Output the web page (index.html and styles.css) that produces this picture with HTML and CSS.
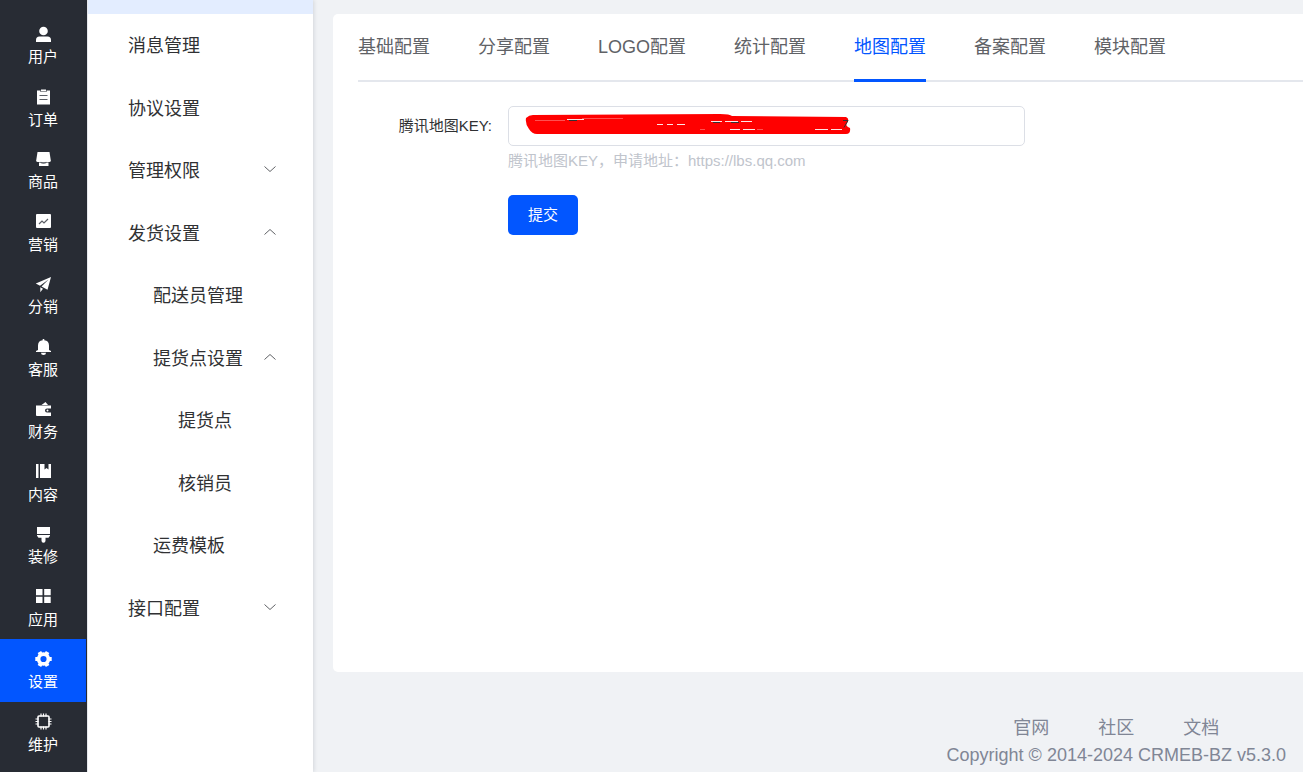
FILE: index.html
```
<!DOCTYPE html>
<html lang="zh-CN">
  <head>
    <meta charset="UTF-8" />
    <meta name="viewport" content="width=device-width, initial-scale=1.0" />
    <title>地图配置</title>
    <link rel="stylesheet" href="styles.css">
  </head>
  <body>
    <div class="layout">
      <nav class="rail" aria-label="主菜单">
        <a class="rail-item" href="#">
          <svg class="rail-icon" viewBox="0 0 16 16"><circle cx="8.5" cy="5" r="4.3"/><path d="M1 16v-2a3.500 3.500 0 0 1 3.500-3.500h8a3.500 3.500 0 0 1 3.500 3.500v2z"/></svg>
          <span>用户</span>
        </a>
        <a class="rail-item" href="#">
          <svg class="rail-icon" viewBox="0 0 16 16"><path d="M2 1.500h3.500v1.500h6v-1.500h3.500v14h-13z"/><path d="M6 .5h5v2h-5z"/><path class="cut" d="M4.500 6.500h8M4.500 10.500h8"/></svg>
          <span>订单</span>
        </a>
        <a class="rail-item" href="#">
          <svg class="rail-icon" viewBox="0 0 16 16"><path d="M2.500 1h12l1.300 8.500a1.500 1.500 0 0 1-1.500 1.500h-11.600a1.500 1.500 0 0 1-1.500-1.500z"/><path d="M4 11.500h9.500v3.500h-9.500z"/><path class="cut" d="M5.500 11.200q3 1.800 6 0"/></svg>
          <span>商品</span>
        </a>
        <a class="rail-item" href="#">
          <svg class="rail-icon" viewBox="0 0 16 16"><rect x="1" width="15" height="14" rx="1"/><path class="cut" d="M4 10l3-3 2 2 4-4"/></svg>
          <span>营销</span>
        </a>
        <a class="rail-item" href="#">
          <svg class="rail-icon" viewBox="0 0 16 16"><path d="M16 1L.8 7.500l4.200 2.300L13.500 3.500 6.500 10.600l6 3.200z"/><path d="M5.300 11.200v5l2.700-3.500z"/></svg>
          <span>分销</span>
        </a>
        <a class="rail-item" href="#">
          <svg class="rail-icon" viewBox="0 0 16 16"><path d="M7.700 0h1.600v1.200a5.300 5.300 0 0 1 4.700 5.300v4.500l2 1v1h-15v-1l2-1v-4.500a5.300 5.300 0 0 1 4.700-5.300z"/><path d="M6 13.800h5a2.500 2.200 0 0 1-5 0z"/></svg>
          <span>客服</span>
        </a>
        <a class="rail-item" href="#">
          <svg class="rail-icon" viewBox="0 0 16 16"><path d="M1 4.500h15v3h-4a2 2 0 0 0 0 4h4v3.500h-14a1 1 0 0 1-1-1z"/><path d="M6.500 4l4-3 2.500 3z"/><circle cx="12.500" cy="9.500" r="1"/></svg>
          <span>财务</span>
        </a>
        <a class="rail-item" href="#">
          <svg class="rail-icon" viewBox="0 0 16 16"><path d="M1 0h2.500v14h-2.500zM5 0h4.500v5.500l2-1.500 2 1.500v-5.500h2.500v14h-11z"/></svg>
          <span>内容</span>
        </a>
        <a class="rail-item" href="#">
          <svg class="rail-icon" viewBox="0 0 16 16"><path d="M2 1h13v7h-13zM2 9h13v.7l-1.500 2h-3v3a2 2 0 0 1-4 0v-3h-3l-1.500-2z"/></svg>
          <span>装修</span>
        </a>
        <a class="rail-item" href="#">
          <svg class="rail-icon" viewBox="0 0 16 16"><path d="M1 0h6.500v6.300h-6.500zM9.200 0h6.500v6.300h-6.500zM1 7.800h6.500v6.300h-6.500zM9.200 7.800h6.500v6.300h-6.500z"/></svg>
          <span>应用</span>
        </a>
        <a class="rail-item active" href="#" aria-current="page">
          <svg class="rail-icon" viewBox="0 0 16 16"><circle class="ring" cx="8.500" cy="8" r="4.900"/><path class="teeth" d="M14 8h2.700M.3 8h2.700M11.300 3.200l1.300-2.300M4.400 15.100l1.300-2.300M5.700 3.200l-1.300-2.300M12.600 15.100l-1.300-2.300"/></svg>
          <span>设置</span>
        </a>
        <a class="rail-item" href="#">
          <svg class="rail-icon" viewBox="0 0 16 16"><rect class="line" x="3" y="2" width="11" height="11" rx="1"/><path class="pins" d="M6 -.5v3M8.500 -.5v3M11 -.5v3M6 12.500v3M8.500 12.500v3M11 12.500v3M.5 5h3M.5 7.500h3M.5 10h3M13.500 5h3M13.500 7.500h3M13.500 10h3"/></svg>
          <span>维护</span>
        </a>
      </nav>

      <nav class="submenu" aria-label="设置菜单">
        <div class="submenu-current"></div>
        <a class="menu-item" href="#">消息管理</a>
        <a class="menu-item" href="#">协议设置</a>
        <button class="menu-item" type="button" aria-expanded="false">
          管理权限
          <svg class="arrow" viewBox="0 0 12 8"><path d="M.5 1.500l5.500 5 5.500-5"/></svg>
        </button>
        <button class="menu-item" type="button" aria-expanded="true">
          发货设置
          <svg class="arrow" viewBox="0 0 12 8"><path d="M.5 6.500l5.500-5 5.500 5"/></svg>
        </button>
        <a class="menu-item level-2" href="#">配送员管理</a>
        <button class="menu-item level-2" type="button" aria-expanded="true">
          提货点设置
          <svg class="arrow" viewBox="0 0 12 8"><path d="M.5 6.500l5.500-5 5.500 5"/></svg>
        </button>
        <a class="menu-item level-3" href="#">提货点</a>
        <a class="menu-item level-3" href="#">核销员</a>
        <a class="menu-item level-2" href="#">运费模板</a>
        <button class="menu-item" type="button" aria-expanded="false">
          接口配置
          <svg class="arrow" viewBox="0 0 12 8"><path d="M.5 1.500l5.500 5 5.500-5"/></svg>
        </button>
      </nav>

      <div class="content">
        <main class="card">
          <div class="tabs">
            <a class="tab" href="#">基础配置</a>
            <a class="tab" href="#">分享配置</a>
            <a class="tab" href="#">LOGO配置</a>
            <a class="tab" href="#">统计配置</a>
            <a class="tab active" href="#">地图配置</a>
            <a class="tab" href="#">备案配置</a>
            <a class="tab" href="#">模块配置</a>
          </div>

          <form class="form">
            <label class="form-label" for="mapKey">腾讯地图KEY:</label>
            <div class="form-field">
              <div class="input-wrap">
                <input type="text" id="mapKey" />
                <svg class="redaction" viewBox="0 0 326 22">
                  <path class="marker" d="M1 4Q4 1 8 1L195 0Q205 0 207 2L321 3Q325 5 322 9Q320 12 325 14Q326 20 321 20L12 20Q7 20 4 15Q0 10 1 4z"/>
                  <path class="gap" d="M42 5.500h17M132 10.500h6M142 10.500h6M152 10.500h8M186 7.500h11M200 7.500h13M216 7.500h11M205 15.500h10M218 15.500h12M290 15.500h13M306 15.500h11"/>
                  <path class="pale" d="M57 4.500h41M10 6.500h30M175 15.500h5M232 15.500h6"/>
                  <path class="ink" d="M44 6.500h8M188 8.500h7M206 8.500h8M318 6.500h5l-4 7"/>
                </svg>
              </div>
              <p class="hint">腾讯地图KEY，申请地址：https://lbs.qq.com</p>
              <button class="submit" type="submit">提交</button>
            </div>
          </form>
        </main>

        <footer class="footer">
          <div class="footer-inner">
            <div class="footer-links">
              <a href="#">官网</a>
              <a href="#">社区</a>
              <a href="#">文档</a>
            </div>
            <div>Copyright © 2014-2024 CRMEB-BZ v5.3.0</div>
          </div>
        </footer>
      </div>
    </div>
  </body>
</html>
```

FILE: styles.css
```
* {
  box-sizing: border-box;
}
body {
  margin: 0;
  font-family: "Liberation Sans", "Noto Sans CJK SC", sans-serif;
  font-size: 18px;
  line-height: 24px;
  color: #303133;
  background-color: #f0f2f5;
}
a {
  color: inherit;
  text-decoration: none;
}
button,
input {
  font: inherit;
  color: inherit;
}
.layout {
  display: flex;
  min-height: 100vh;
}

/* main menu */
.rail {
  flex: none;
  width: 87px;
  padding: 14px 1px 0 0;
  background-color: #282c34;
}
.rail-item {
  display: flex;
  flex-direction: column;
  align-items: center;
  gap: 5px;
  height: 62px;
  padding-top: 12px;
  font-size: 15px;
  line-height: 20px;
  color: #fff;
}
.rail-item:nth-child(odd) {
  height: 63px;
}
.rail-icon {
  flex: none;
  width: 16px;
  height: 16px;
  fill: #fff;
  overflow: visible;
}
.rail-item.active {
  background-color: #0256ff;
}
.rail-icon .cut {
  fill: none;
  stroke: #5b5f66;
  stroke-width: 1.2;
}
.rail-icon .ring {
  fill: none;
  stroke: #fff;
  stroke-width: 3.6;
}
.rail-icon .teeth {
  stroke: #fff;
  stroke-width: 4;
}
.rail-icon .line {
  fill: none;
  stroke: #fff;
  stroke-width: 1.6;
}
.rail-icon .pins {
  stroke: #fff;
  stroke-width: 1.2;
}

/* second menu */
.submenu {
  z-index: 1;
  flex: none;
  width: 226px;
  border-left: 1px solid #e6e8ec;
  background-color: #fff;
  box-shadow: 1px 0 4px rgba(0, 21, 41, 0.12);
}
.submenu-current {
  height: 14px;
  background-color: #e3edff;
}
.menu-item {
  display: flex;
  align-items: center;
  justify-content: space-between;
  width: 100%;
  height: 63px;
  padding: 1px 37px 0 40px;
  border: none;
  background: none;
  text-align: left;
  cursor: pointer;
}
.menu-item:nth-child(odd) {
  height: 62px;
}
.level-2 {
  padding-left: 65px;
}
.level-3 {
  padding-left: 90px;
}
.arrow {
  width: 12px;
  height: 8px;
  margin-bottom: 4px;
  fill: none;
  stroke: #606266;
}

/* content */
.content {
  display: flex;
  flex: 1;
  flex-direction: column;
  min-width: 0;
  padding: 14px 0 0 20px;
}
.card {
  flex: 1;
  padding-left: 25px;
  border-radius: 5px 0 0 5px;
  background-color: #fff;
}
.tabs {
  display: flex;
  gap: 48px;
  border-bottom: 2px solid #e4e7ed;
}
.tab {
  height: 68px;
  margin-bottom: -2px;
  padding-top: 21px;
  color: #606266;
  white-space: nowrap;
}
.tab.active {
  border-bottom: 3px solid #0256ff;
  color: #0256ff;
}
.form {
  display: flex;
  gap: 16px;
  padding-top: 24px;
  font-size: 15px;
}
.form-label {
  width: 134px;
  line-height: 40px;
  text-align: right;
  white-space: nowrap;
}
.form-field {
  flex: 1;
  max-width: 517px;
}
.input-wrap {
  position: relative;
}
.input-wrap input {
  display: block;
  width: 100%;
  height: 40px;
  padding: 0 19px;
  border: 1px solid #dcdfe6;
  border-radius: 5px;
  background-color: #fff;
}
.redaction {
  position: absolute;
  top: 8px;
  left: 17px;
  width: 326px;
  height: 22px;
  overflow: visible;
}
.marker {
  fill: #f00;
}
.gap {
  fill: none;
  stroke: #ffe5e5;
}
.pale {
  fill: none;
  stroke: #ff5050;
}
.ink {
  fill: none;
  stroke: #303133;
}
.hint {
  margin: 5px 0 24px;
  line-height: 20px;
  color: #c0c4cc;
}
.submit {
  height: 40px;
  padding: 0 20px;
  border: none;
  border-radius: 5px;
  background-color: #0256ff;
  color: #fff;
  cursor: pointer;
}
.footer {
  display: flex;
  justify-content: flex-end;
  padding: 43px 17px 3px 0;
  line-height: 27px;
  color: #808695;
  text-align: center;
}
.footer-links {
  display: flex;
  justify-content: center;
  gap: 49px;
}
```
